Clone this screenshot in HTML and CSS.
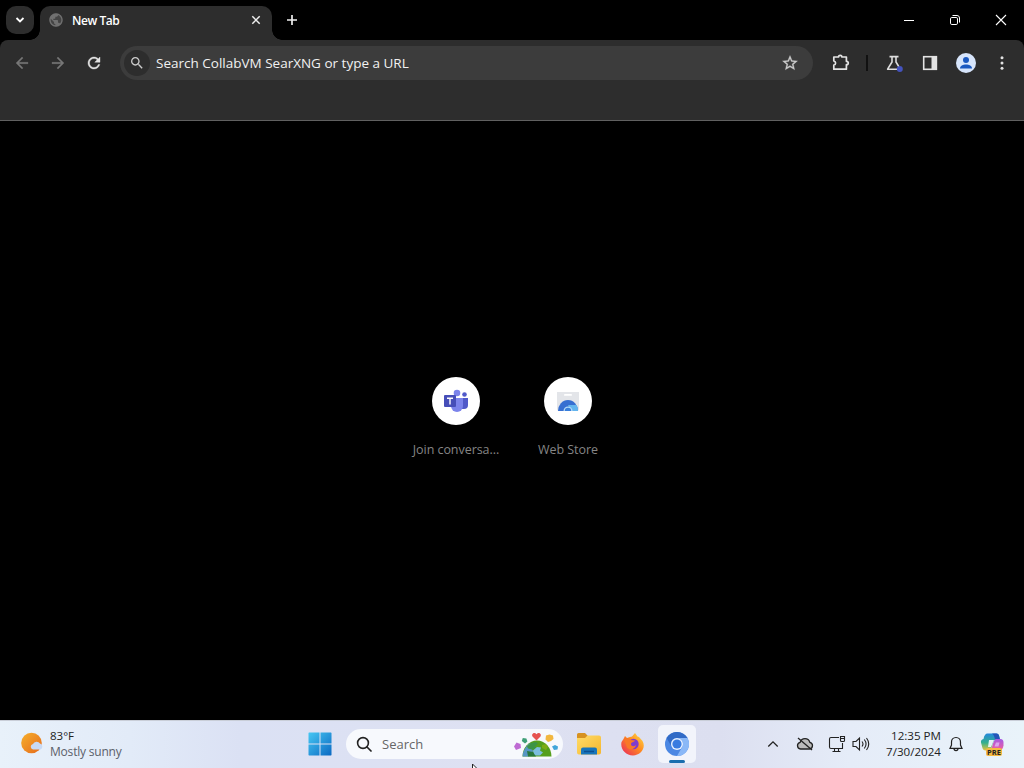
FILE: index.html
```html
<!DOCTYPE html>
<html lang="en">
<head>
    <meta charset="UTF-8">
    <meta name="viewport" content="width=device-width, initial-scale=1.0">
    <title>New Tab</title>
    <link rel="stylesheet" href="styles.css">
</head>
<body>
<div class="desktop">

    <!-- Tab strip -->
    <div class="tab-strip">
        <div class="tab-search">
            <svg width="10" height="10" viewBox="0 0 10 10"><path d="M1.5 3l3.5 3.5L8.5 3" fill="none" stroke="#fff" stroke-width="1.8"/></svg>
        </div>
        <div class="tab">
            <svg class="favicon" width="16" height="16" viewBox="0 0 24 24"><circle cx="12" cy="12" r="10" fill="#444"/><path fill="#707070" d="M12 2C6.480 2 2 6.480 2 12s4.480 10 10 10 10-4.480 10-10S17.520 2 12 2zm-1 17.930c-3.950-.49-7-3.850-7-7.930 0-.62.08-1.210.21-1.790L9 15v1c0 1.100.9 2 2 2v1.930zm6.900-2.540c-.26-.81-1-1.390-1.900-1.390h-1v-3c0-.55-.45-1-1-1H8v-2h2c.55 0 1-.45 1-1V7h2c1.100 0 2-.9 2-2v-.41c2.930 1.190 5 4.060 5 7.410 0 2.080-.8 3.970-2.100 5.390z"/></svg>
            <span class="tab-title">New Tab</span>
            <svg width="10" height="10" viewBox="0 0 10 10"><path d="M1.3 1.3l7.4 7.4M8.7 1.3L1.3 8.7" stroke="#eee" stroke-width="1.5"/></svg>
        </div>
        <div class="new-tab">
            <svg width="12" height="12" viewBox="0 0 12 12"><path d="M6 1v10M1 6h10" stroke="#eee" stroke-width="1.7"/></svg>
        </div>
        <div class="window-buttons">
            <div class="window-button">
                <svg width="12" height="12" viewBox="0 0 12 12"><path d="M1 6.5h10" stroke="#fff"/></svg>
            </div>
            <div class="window-button">
                <svg width="12" height="12" viewBox="0 0 12 12" fill="none" stroke="#fff"><rect x="1.5" y="3.5" width="7" height="7" rx="1.3"/><path d="M3.5 1.5H8a2.5 2.5 0 0 1 2.5 2.5v4.5"/></svg>
            </div>
            <div class="window-button">
                <svg width="12" height="12" viewBox="0 0 12 12"><path d="M1 1l10 10M11 1L1 11" stroke="#fff" stroke-width="1.1"/></svg>
            </div>
        </div>
    </div>

    <!-- Toolbar -->
    <div class="toolbar">
        <div class="nav-row">
            <div class="tool">
                <svg width="18" height="18" viewBox="0 0 24 24"><path fill="#777" stroke="#777" stroke-width=".4" d="M20 11H7.83l5.59-5.59L12 4l-8 8 8 8 1.41-1.41L7.83 13H20v-2z"/></svg>
            </div>
            <div class="tool">
                <svg width="18" height="18" viewBox="0 0 24 24"><path fill="#777" stroke="#777" stroke-width=".4" d="M12 4l-1.41 1.41L16.17 11H4v2h12.17l-5.58 5.59L12 20l8-8z"/></svg>
            </div>
            <div class="tool">
                <svg width="18" height="18" viewBox="0 0 24 24"><path fill="#e3e3e3" stroke="#e3e3e3" stroke-width=".5" d="M17.65 6.35C16.2 4.9 14.21 4 12 4c-4.42 0-7.99 3.58-7.99 8s3.57 8 7.99 8c3.73 0 6.84-2.55 7.73-6h-2.08c-.82 2.33-3.04 4-5.65 4-3.31 0-6-2.69-6-6s2.69-6 6-6c1.66 0 3.14.69 4.22 1.78L13 11h7V4l-2.35 2.35z"/></svg>
            </div>
            <div class="omnibox">
                <div class="omnibox-icon">
                    <svg width="16" height="16" viewBox="0 0 24 24"><path fill="#ccc" d="M15.5 14h-.79l-.28-.27C15.41 12.59 16 11.11 16 9.5 16 5.91 13.09 3 9.5 3S3 5.91 3 9.5 5.91 16 9.5 16c1.61 0 3.09-.59 4.23-1.57l.27.28v.79l5 4.99L20.49 19l-4.99-5zm-6 0C7.01 14 5 11.99 5 9.5S7.01 5 9.5 5 14 7.01 14 9.5 11.99 14 9.5 14z"/></svg>
                </div>
                <span class="omnibox-text">Search CollabVM SearXNG or type a URL</span>
                <svg width="18" height="18" viewBox="0 0 24 24"><path fill="#ccc" stroke="#ccc" stroke-width=".4" d="M22 9.24l-7.19-.62L12 2 9.19 8.63 2 9.24l5.46 4.73L5.82 21 12 17.27 18.18 21l-1.63-7.03L22 9.24zM12 15.4l-3.76 2.27 1-4.28-3.32-2.88 4.38-.38L12 6.1l1.71 4.04 4.38.38-3.32 2.88 1 4.28L12 15.4z"/></svg>
            </div>
            <div class="tool extensions">
                <svg width="20" height="20" viewBox="0 0 20 20"><path fill="none" stroke="#e3e3e3" stroke-width="1.7" stroke-linejoin="round" d="M2.800 4h4.700c0-2.300 3.400-2.300 3.400 0h4.500v4.300c2.500 0 2.500 3.400 0 3.400v4.500H2.800v-4c2.400-.3 2.400-3.900 0-4.200z"/></svg>
            </div>
            <div class="separator"></div>
            <div class="tool">
                <svg width="20" height="20" viewBox="0 0 20 20"><path fill="none" stroke="#dedede" stroke-width="1.6" stroke-linejoin="round" d="M5.5 3.6h9M8 4v5L3.6 16.2h12.8L12 9V4"/><circle cx="15.8" cy="16" r="3" fill="#4453bd"/></svg>
            </div>
            <div class="tool">
                <svg width="16" height="16" viewBox="0 0 16 16"><rect x="1.7" y="1.7" width="12.6" height="12.6" fill="none" stroke="#e3e3e3" stroke-width="1.6"/><path d="M9.5 1h5.6v14H9.5z" fill="#e3e3e3"/></svg>
            </div>
            <div class="tool">
                <svg width="20" height="20" viewBox="0 0 20 20"><circle cx="10" cy="10" r="10" fill="#d7e5fb"/><circle cx="10" cy="7" r="3" fill="#1a58c0"/><path d="M4 15.5c0-5.3 12-5.3 12 0z" fill="#1a58c0"/></svg>
            </div>
            <div class="tool">
                <svg width="4" height="16" viewBox="0 0 4 16" fill="#e3e3e3"><circle cx="2" cy="2.8" r="1.5"/><circle cx="2" cy="8" r="1.5"/><circle cx="2" cy="13.2" r="1.5"/></svg>
            </div>
        </div>
    </div>

    <!-- New tab page -->
    <div class="page">
        <div class="tile">
            <div class="tile-icon">
                <svg width="24" height="24" viewBox="0 0 24 24">
                    <circle cx="20.500" cy="5.500" r="2.300" fill="#5059c9"/>
                    <path d="M16 9h8v7a4 4 0 0 1-4 4h-3z" fill="#5059c9"/>
                    <circle cx="13" cy="4" r="3.300" fill="#7b83eb"/>
                    <path d="M7 9h12v8a6 6 0 0 1-12 0z" fill="#7b83eb"/>
                    <rect x="0" y="6" width="12" height="12" rx="1" fill="#464eb8"/>
                    <path d="M3 9.200h6M6 9v6.500" stroke="#fff" stroke-width="1.400"/>
                </svg>
            </div>
            <span class="tile-title">Join conversa...</span>
        </div>
        <div class="tile">
            <div class="tile-icon">
                <svg width="24" height="24" viewBox="0 0 24 24">
                    <path d="M1 3h22v17a2 2 0 0 1-2 2H3a2 2 0 0 1-2-2z" fill="#e3e5e9"/>
                    <rect x="8" y="5" width="8" height="1.800" rx=".9" fill="#fff"/>
                    <path d="M2 22a10 11 0 0 1 20 0z" fill="#376fd1"/>
                    <path d="M12 16h8.500a10 10 0 0 1 1.500 6h-7z" fill="#63b5ee"/>
                    <path d="M7.500 22a4.500 4.500 0 0 1 9 0z" fill="#b5dbf8"/>
                    <path d="M8.800 22a3.200 3.200 0 0 1 6.400 0z" fill="#387edb"/>
                </svg>
            </div>
            <span class="tile-title">Web Store</span>
        </div>
    </div>

    <!-- Taskbar -->
    <div class="taskbar">
        <div class="weather">
            <svg width="24" height="24" viewBox="0 0 24 24">
                <defs><linearGradient id="sun" x1="0" y1="0" x2="1" y2="1"><stop offset="0" stop-color="#f6b02c"/><stop offset="1" stop-color="#e56a1c"/></linearGradient></defs>
                <circle cx="11.500" cy="11" r="10.300" fill="url(#sun)"/>
                <path d="M13 17.500a2.800 2.800 0 0 1 0-5.500 4 4 0 0 1 7-.5 3.200 3.200 0 0 1 .5 6z" fill="#c8daf5"/>
            </svg>
            <div class="weather-text">
                <span class="temperature">83°F</span>
                <span class="conditions">Mostly sunny</span>
            </div>
        </div>

        <div class="apps">
            <svg class="start" width="24" height="24" viewBox="0 0 24 24">
                <defs><linearGradient id="win" x1="0" y1="0" x2="1" y2="1"><stop offset="0" stop-color="#46c7f3"/><stop offset="1" stop-color="#0b69c2"/></linearGradient></defs>
                <path d="M1 .5h10.500V11.500H.5V1zM12.500.5H23l.5.5v10.500h-11zM.5 12.500h11v11H1l-.5-.5zM12.500 12.500h11V23l-.5.5H12.500z" fill="url(#win)"/>
            </svg>
            <div class="search">
                <svg width="16" height="16" viewBox="0 0 16 16"><circle cx="7" cy="7" r="5.400" fill="none" stroke="#222" stroke-width="1.600"/><path d="M11 11l4 4" stroke="#222" stroke-width="1.700" stroke-linecap="round"/></svg>
                <span class="search-text">Search</span>
                <svg width="46" height="28" viewBox="0 0 46 28">
                    <path d="M9.500 26.500a14.500 16 0 0 1 29 0z" fill="#559f1c"/>
                    <path d="M9.500 26.500q.5-8 7-13l6 1-4 4 2 3-4 1-1 4z" fill="#5796c4"/>
                    <path d="M14 16.500l4-3.500 5-1 2 1.500-3 3 2 2-5 1-4-1z" fill="#3c9447"/>
                    <path d="M20 20.500l4-3.500 4 .5-1 3 3 2-3 3h-6z" fill="#7bbede"/>
                    <path d="M14 21l6 1 3 4.500h-8z" fill="#29783c"/>
                    <path d="M29 15l4-1 2 3-2 3-4-2z" fill="#7cab16"/>
                    <path d="M23.500 10.500l-4-4c-1.500-2.500 2-5 4-2.200 2-2.800 5.500-.3 4 2.200z" fill="#e65350"/>
                    <path d="M12 13.500L8.800 11l1-3 3.600.500 1 3z" fill="#3f9f77"/>
                    <path d="M35 12l-2.500-2.500.5-4 3.500-1 3.500 1 .5 3.500-2.500 2z" fill="#f2b73f"/>
                    <path d="M3 20l-2-3.500 2.500-4 4 1.500.5 4z" fill="#be6bd3"/>
                    <path d="M41 20l-2-3.500 3-1.500 3 1.500-.5 3z" fill="#41a5d9"/>
                </svg>
            </div>
            <svg class="folder" width="26" height="24" viewBox="0 0 26 24">
                <defs><linearGradient id="dir" x1="0" y1="0" x2="1" y2="1"><stop offset="0" stop-color="#ffdc68"/><stop offset="1" stop-color="#f5b62e"/></linearGradient></defs>
                <path d="M1 2.500Q1 1 2.500 1H9l3 3h-1v3H1z" fill="#d79221"/>
                <path d="M1 6h8l2.500-2.500H23Q25 3.500 25 5.500v15q0 2-2 2H3q-2 0-2-2z" fill="url(#dir)"/>
                <path d="M5 22.500V17.500q0-2 2-2h12q2 0 2 2v5z" fill="#1875bb"/>
                <path d="M8 19.500h10" stroke="#0b4f91" stroke-width="1.500"/>
            </svg>
            <svg class="firefox" width="24" height="24" viewBox="0 0 24 24">
                <defs><linearGradient id="fox" x1="1" y1="0" x2="0" y2="1"><stop offset="0" stop-color="#ffe34b"/><stop offset=".45" stop-color="#ff8a20"/><stop offset="1" stop-color="#e82260"/></linearGradient></defs>
                <path d="M2.500 7L4 4l2 2C8 5 10 5 11 4.500L14 1l2.500 3.500L18 5l3.500 4c4 7-2 14.500-9.500 14.500S-1 17 .5 10z" fill="url(#fox)"/>
                <circle cx="12.500" cy="12" r="5.200" fill="#7f3bce"/>
                <path d="M3 7c3-2 6-1 7 1l4 .5c-1 2-4 1.500-4 3.500 0 2.500 3 3 5 1-.5 4-6 6-9 2.500z" fill="#f97826"/>
            </svg>
            <div class="active-app">
                <svg width="24" height="24" viewBox="0 0 24 24">
                    <circle cx="12" cy="12" r="12" fill="#4b87e3"/>
                    <path d="M1.600 6A12 12 0 0 1 22.400 6H12a6 6 0 0 0-5.200 9z" fill="#326bc6"/>
                    <path d="M22.400 6A12 12 0 0 1 12 24l5.200-9A6 6 0 0 0 12 6z" fill="#8ab8f7"/>
                    <circle cx="12" cy="12" r="6" fill="#e8f1ff"/>
                    <circle cx="12" cy="12" r="4.600" fill="#397be0"/>
                </svg>
                <div class="active-line"></div>
            </div>
        </div>

        <div class="tray">
            <svg width="12" height="8" viewBox="0 0 12 8"><path d="M1.300 6.500L6 1.800l4.700 4.700" fill="none" stroke="#222" stroke-width="1.300"/></svg>
            <svg class="cloud" width="18" height="16" viewBox="0 0 18 16" fill="none" stroke="#222" stroke-width="1.300"><path d="M4.500 13a3.400 3.400 0 0 1-.3-6.700 5 5 0 0 1 9.600 0 3.400 3.400 0 0 1-.3 6.700z" fill="#bbb"/><path d="M2 2l14 12"/></svg>
            <svg class="network" width="18" height="18" viewBox="0 0 18 18" fill="none" stroke="#222" stroke-width="1.100"><path d="M11 2.500H3Q1.500 2.500 1.500 4v8q0 1.500 1.500 1.500h11.500V8M6.500 13.500v3M10.500 13.500v3M4.500 16.500h8M12.500 1.500h4v4q0 1-1 1h-2q-1 0-1-1zM12.500 3.500h4"/></svg>
            <svg class="volume" width="18" height="16" viewBox="0 0 18 16" fill="none" stroke="#222" stroke-width="1.100"><path d="M1 5.500h3l3.500-3.500v12L4 10.500H1zM10 5.500q2 2.500 0 5M12.300 3.500q3.500 4.500 0 9M14.500 2q4.500 6 0 12"/></svg>
            <div class="clock">
                <span>12:35 PM</span>
                <span>7/30/2024</span>
            </div>
            <svg class="bell" width="14" height="16" viewBox="0 0 14 16" fill="none" stroke="#222" stroke-width="1.200"><path d="M7 1.500c-3 0-4.500 2-4.500 4.500v3L1 12.300h12L11.500 9V6c0-2.500-1.500-4.500-4.500-4.500zM5 12.500c0 2.700 4 2.700 4 0"/></svg>
            <div class="copilot">
                <svg width="24" height="24" viewBox="0 0 24 24">
                    <defs>
                        <linearGradient id="cpa" x1="0" y1="0" x2="0" y2="1"><stop offset="0" stop-color="#2387dd"/><stop offset=".55" stop-color="#35b08d"/><stop offset="1" stop-color="#e6c43c"/></linearGradient>
                        <linearGradient id="cpb" x1="0" y1="0" x2="0" y2="1"><stop offset="0" stop-color="#a45ae5"/><stop offset="1" stop-color="#f4609b"/></linearGradient>
                    </defs>
                    <path d="M7.500 1.500h9q2 0 2.500 2l1 4h-4q-2 0-3 3l-2 8H5.500q-2.500 0-3.200-3L1 10.500Q.5 7.500 3.500 7q1-5.500 4-5.500z" fill="url(#cpa)"/>
                    <path d="M12 1.500h4.500q2 0 2.500 2l1 4h-5q-1-5-3-6z" fill="#2454b8"/>
                    <path d="M16.500 7h4q3 0 3 3.500v3q-.5 4-3.500 5h-9l2.500-8.500q1-3 3-3z" fill="url(#cpb)"/>
                    <path d="M9 8h5l-3 7H8z" fill="#e2f3f7"/>
                    <path d="M16 10.500h3.500l-1 4h-4z" fill="#dba4ee"/>
                </svg>
                <span class="pre">PRE</span>
            </div>
        </div>
    </div>

    <!-- Mouse pointer -->
    <svg class="pointer" width="8" height="4" viewBox="0 0 8 4"><path d="M.5 0v5h5z" fill="#fff" stroke="#222"/></svg>
</div>
</body>
</html>
```
FILE: styles.css
```css
body, html {
    margin: 0;
    padding: 0;
    height: 100%;
    font-family: "Open Sans", "Noto Sans", sans-serif;
    background-color: #000;
    overflow: hidden;
}

svg {
    display: block;
    flex-shrink: 0;
}

span {
    white-space: nowrap;
}

.desktop {
    position: relative;
    width: 1024px;
    height: 768px;
    display: flex;
    flex-direction: column;
}

/* Tab strip */
.tab-strip {
    height: 40px;
    display: flex;
    align-items: center;
    background-color: #000;
}

.tab-search {
    width: 28px;
    height: 28px;
    margin-left: 6px;
    border-radius: 10px;
    background-color: #2d2d2d;
    display: flex;
    align-items: center;
    justify-content: center;
}

.tab {
    position: relative;
    box-sizing: border-box;
    width: 232px;
    height: 34px;
    margin: 6px 0 0 6px;
    padding: 0 11px 6px 8px;
    border-radius: 10px 10px 0 0;
    background-color: #2d2d2d;
    display: flex;
    align-items: center;
}

/* Curved feet of the tab */
.tab::before,
.tab::after {
    content: "";
    position: absolute;
    bottom: 0;
    width: 10px;
    height: 10px;
}

.tab::before {
    left: -10px;
    background: radial-gradient(circle at 0 0, transparent 9.5px, #2d2d2d 10px);
}

.tab::after {
    right: -10px;
    background: radial-gradient(circle at 100% 0, transparent 9.5px, #2d2d2d 10px);
}

.tab-title {
    flex: 1;
    margin-left: 8px;
    color: #fff;
    font-size: 12px;
    font-weight: 600;
    letter-spacing: -0.45px;
}

.new-tab {
    margin-left: 14px;
}

.window-buttons {
    margin-left: auto;
    display: flex;
}

.window-button {
    width: 46px;
    display: flex;
    justify-content: center;
}

/* Toolbar */
.toolbar {
    box-sizing: border-box;
    height: 81px;
    padding-top: 6px;
    border-bottom: 1px solid #606060;
    border-radius: 8px 8px 0 0;
    background-color: #2d2d2d;
}

.nav-row {
    height: 34px;
    padding: 0 4px;
    display: flex;
    align-items: center;
}

.tool {
    width: 36px;
    flex-shrink: 0;
    display: flex;
    justify-content: center;
}

.omnibox {
    box-sizing: border-box;
    width: 693px;
    height: 34px;
    margin-left: 8px;
    padding: 0 14px 0 4px;
    border-radius: 17px;
    background-color: #3c3c3c;
    display: flex;
    align-items: center;
}

.omnibox-icon {
    width: 26px;
    height: 26px;
    border-radius: 50%;
    background-color: #2d2d2d;
    display: flex;
    align-items: center;
    justify-content: center;
}

.omnibox-text {
    flex: 1;
    margin-left: 6px;
    color: #f1f1f1;
    font-size: 13.5px;
}

.extensions {
    margin-left: 10px;
}

.separator {
    width: 2px;
    height: 16px;
    margin: 0 8px 0 7px;
    background-color: #111;
}

/* New tab page */
.page {
    flex: 1;
    display: flex;
    justify-content: center;
    background-color: #000;
}

.tile {
    width: 112px;
    margin-top: 256px;
    display: flex;
    flex-direction: column;
    align-items: center;
}

.tile-icon {
    width: 48px;
    height: 48px;
    border-radius: 50%;
    background-color: #fff;
    display: flex;
    align-items: center;
    justify-content: center;
}

.tile-title {
    margin-top: 16px;
    color: #858585;
    font-size: 12.5px;
    line-height: 18px;
    letter-spacing: -0.05px;
}

/* Taskbar */
.taskbar {
    height: 48px;
    box-shadow: inset 0 1px 0 #c9ced8;
    background: linear-gradient(90deg, #e8f1fa 0, #e2ebf8 130px, #dbe1f4 240px, #dee1f2 500px, #dcdff0 720px, #e5ecf8 850px, #e9f3fa 100%);
    display: flex;
    align-items: center;
}

.weather {
    width: 308px;
    flex-shrink: 0;
    padding-left: 20px;
    box-sizing: border-box;
    display: flex;
    align-items: center;
}

.weather-text {
    margin-left: 6px;
    display: flex;
    flex-direction: column;
    font-size: 12px;
    line-height: 16px;
}

.temperature {
    color: #222;
    font-size: 11.5px;
}

.conditions {
    color: #5b6069;
    letter-spacing: -0.2px;
}

.apps {
    display: flex;
    align-items: center;
}

.search {
    box-sizing: border-box;
    width: 217px;
    height: 30px;
    margin-left: 14px;
    padding: 0 4px 0 10px;
    border-radius: 15px;
    background-color: #f7f9fd;
    display: flex;
    align-items: center;
}

.search-text {
    flex: 1;
    margin-left: 10px;
    color: #666;
    font-size: 13px;
}

.folder {
    margin-left: 13px;
}

.firefox {
    margin-left: 19px;
}

.active-app {
    position: relative;
    width: 38px;
    height: 38px;
    margin-left: 13px;
    border-radius: 5px;
    background-color: #f2f4fb;
    display: flex;
    align-items: center;
    justify-content: center;
}

.active-line {
    position: absolute;
    left: 11px;
    bottom: 0;
    width: 16px;
    height: 3px;
    border-radius: 2px;
    background-color: #1a6dae;
}

.tray {
    margin-left: auto;
    padding-right: 20px;
    display: flex;
    align-items: center;
}

.cloud {
    margin-left: 17px;
}

.network {
    margin-left: 14px;
}

.volume {
    margin-left: 6px;
}

.clock {
    width: 62px;
    margin-left: 9px;
    display: flex;
    flex-direction: column;
    align-items: flex-end;
    color: #222;
    font-size: 11.6px;
    line-height: 16px;
}

.bell {
    margin-left: 8px;
}

.copilot {
    position: relative;
    margin-left: 17px;
}

.pre {
    position: absolute;
    left: 6px;
    bottom: 0;
    padding: 0 1px;
    border-radius: 2px;
    background-color: #f5b942;
    color: #222;
    font-size: 7.5px;
    font-weight: 700;
    line-height: 8px;
}

.pointer {
    position: absolute;
    left: 472px;
    top: 764px;
}
```
